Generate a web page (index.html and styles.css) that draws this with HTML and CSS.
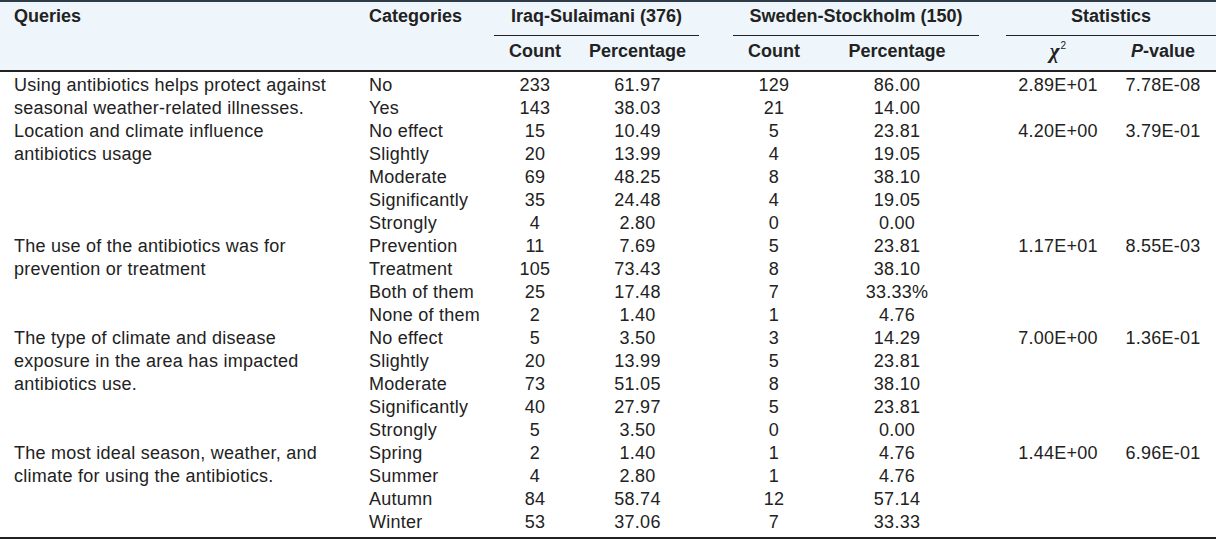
FILE: index.html
```html
<!DOCTYPE html>
<html lang="en">
<head>
<meta charset="utf-8">
<title>Antibiotics and climate survey</title>
<link rel="stylesheet" href="styles.css">
</head>
<body>
<table class="data">
  <colgroup>
    <col class="w-query"><col class="w-cat"><col class="w-c1"><col class="w-p1"><col class="w-gap1"><col class="w-c2"><col class="w-p2"><col class="w-gap2"><col class="w-chi"><col class="w-pv">
  </colgroup>
  <thead>
    <tr class="h1">
      <th rowspan="2" class="left">Queries</th>
      <th rowspan="2" class="left">Categories</th>
      <th colspan="2" class="group">Iraq-Sulaimani (376)</th>
      <th rowspan="2" class="gap"></th>
      <th colspan="2" class="group">Sweden-Stockholm (150)</th>
      <th rowspan="2" class="gap"></th>
      <th colspan="2" class="group">Statistics</th>
    </tr>
    <tr class="h2">
      <th>Count</th><th>Percentage</th>
      <th>Count</th><th>Percentage</th>
      <th><span class="chi">χ</span><sup class="sq">2</sup></th><th><i>P</i>-value</th>
    </tr>
  </thead>
  <tbody>
    <tr class="first">
      <td rowspan="2" class="q">Using antibiotics helps protect against<br>seasonal weather-related illnesses.</td>
      <td class="cat">No</td><td>233</td><td>61.97</td><td></td><td>129</td><td>86.00</td><td></td><td>2.89E+01</td><td>7.78E-08</td>
    </tr>
    <tr><td class="cat">Yes</td><td>143</td><td>38.03</td><td></td><td>21</td><td>14.00</td><td></td><td></td><td></td></tr>

    <tr>
      <td rowspan="5" class="q">Location and climate influence<br>antibiotics usage</td>
      <td class="cat">No effect</td><td>15</td><td>10.49</td><td></td><td>5</td><td>23.81</td><td></td><td>4.20E+00</td><td>3.79E-01</td>
    </tr>
    <tr><td class="cat">Slightly</td><td>20</td><td>13.99</td><td></td><td>4</td><td>19.05</td><td></td><td></td><td></td></tr>
    <tr><td class="cat">Moderate</td><td>69</td><td>48.25</td><td></td><td>8</td><td>38.10</td><td></td><td></td><td></td></tr>
    <tr><td class="cat">Significantly</td><td>35</td><td>24.48</td><td></td><td>4</td><td>19.05</td><td></td><td></td><td></td></tr>
    <tr><td class="cat">Strongly</td><td>4</td><td>2.80</td><td></td><td>0</td><td>0.00</td><td></td><td></td><td></td></tr>

    <tr>
      <td rowspan="4" class="q">The use of the antibiotics was for<br>prevention or treatment</td>
      <td class="cat">Prevention</td><td>11</td><td>7.69</td><td></td><td>5</td><td>23.81</td><td></td><td>1.17E+01</td><td>8.55E-03</td>
    </tr>
    <tr><td class="cat">Treatment</td><td>105</td><td>73.43</td><td></td><td>8</td><td>38.10</td><td></td><td></td><td></td></tr>
    <tr><td class="cat">Both of them</td><td>25</td><td>17.48</td><td></td><td>7</td><td>33.33%</td><td></td><td></td><td></td></tr>
    <tr><td class="cat">None of them</td><td>2</td><td>1.40</td><td></td><td>1</td><td>4.76</td><td></td><td></td><td></td></tr>

    <tr>
      <td rowspan="5" class="q">The type of climate and disease<br>exposure in the area has impacted<br>antibiotics use.</td>
      <td class="cat">No effect</td><td>5</td><td>3.50</td><td></td><td>3</td><td>14.29</td><td></td><td>7.00E+00</td><td>1.36E-01</td>
    </tr>
    <tr><td class="cat">Slightly</td><td>20</td><td>13.99</td><td></td><td>5</td><td>23.81</td><td></td><td></td><td></td></tr>
    <tr><td class="cat">Moderate</td><td>73</td><td>51.05</td><td></td><td>8</td><td>38.10</td><td></td><td></td><td></td></tr>
    <tr><td class="cat">Significantly</td><td>40</td><td>27.97</td><td></td><td>5</td><td>23.81</td><td></td><td></td><td></td></tr>
    <tr><td class="cat">Strongly</td><td>5</td><td>3.50</td><td></td><td>0</td><td>0.00</td><td></td><td></td><td></td></tr>

    <tr>
      <td rowspan="4" class="q">The most ideal season, weather, and<br>climate for using the antibiotics.</td>
      <td class="cat">Spring</td><td>2</td><td>1.40</td><td></td><td>1</td><td>4.76</td><td></td><td>1.44E+00</td><td>6.96E-01</td>
    </tr>
    <tr><td class="cat">Summer</td><td>4</td><td>2.80</td><td></td><td>1</td><td>4.76</td><td></td><td></td><td></td></tr>
    <tr><td class="cat">Autumn</td><td>84</td><td>58.74</td><td></td><td>12</td><td>57.14</td><td></td><td></td><td></td></tr>
    <tr class="last"><td class="cat">Winter</td><td>53</td><td>37.06</td><td></td><td>7</td><td>33.33</td><td></td><td></td><td></td></tr>
  </tbody>
</table>
</body>
</html>
```

FILE: styles.css
```css
html, body {
  margin: 0;
  padding: 0;
  background: #ffffff;
}

.data {
  width: 1216px;
  table-layout: fixed;
  border-collapse: separate;
  border-spacing: 0;
  font-family: "Liberation Sans", Arial, sans-serif;
  font-size: 18px;
  color: #222222;
  border-bottom: 2px solid #222222;
}

.w-query { width: 355px; }
.w-cat { width: 139px; }
.w-c1 { width: 82px; }
.w-p1 { width: 123px; }
.w-gap1 { width: 34px; }
.w-c2 { width: 82px; }
.w-p2 { width: 164px; }
.w-gap2 { width: 27px; }
.w-chi { width: 104px; }
.w-pv { width: 106px; }

thead th {
  background: #eef6fb;
  font-weight: bold;
  text-align: center;
  line-height: 23px;
  padding: 0;
  vertical-align: top;
  white-space: nowrap;
}

.h1 th {
  border-top: 2px solid #2e3b48;
  height: 30px;
  padding-top: 3px;
}

.h1 th[rowspan] {
  border-bottom: 2px solid #222222;
}

.h1 th.group {
  border-bottom: 1px solid #222222;
}

.h2 th {
  height: 30px;
  padding-top: 4px;
  border-bottom: 2px solid #222222;
}

th.left {
  text-align: left;
  padding-left: 14px;
}

.chi {
  font-family: "Liberation Serif", "Times New Roman", serif;
  font-style: italic;
  font-weight: bold;
  font-size: 21px;
}

.sq {
  font-size: 10px;
  font-weight: normal;
  vertical-align: 9px;
  line-height: 0;
  margin-left: 1px;
}

tbody td {
  padding: 0;
  height: 23px;
  line-height: 23px;
  text-align: center;
  vertical-align: top;
  white-space: nowrap;
  color: #222222;
  letter-spacing: 0.25px;
}

tbody td.q {
  text-align: left;
  padding-left: 14px;
}

tbody td.cat {
  text-align: left;
  padding-left: 14px;
}

tbody tr.first td {
  padding-top: 2px;
}

tbody tr.last td {
  padding-bottom: 3px;
}
```
